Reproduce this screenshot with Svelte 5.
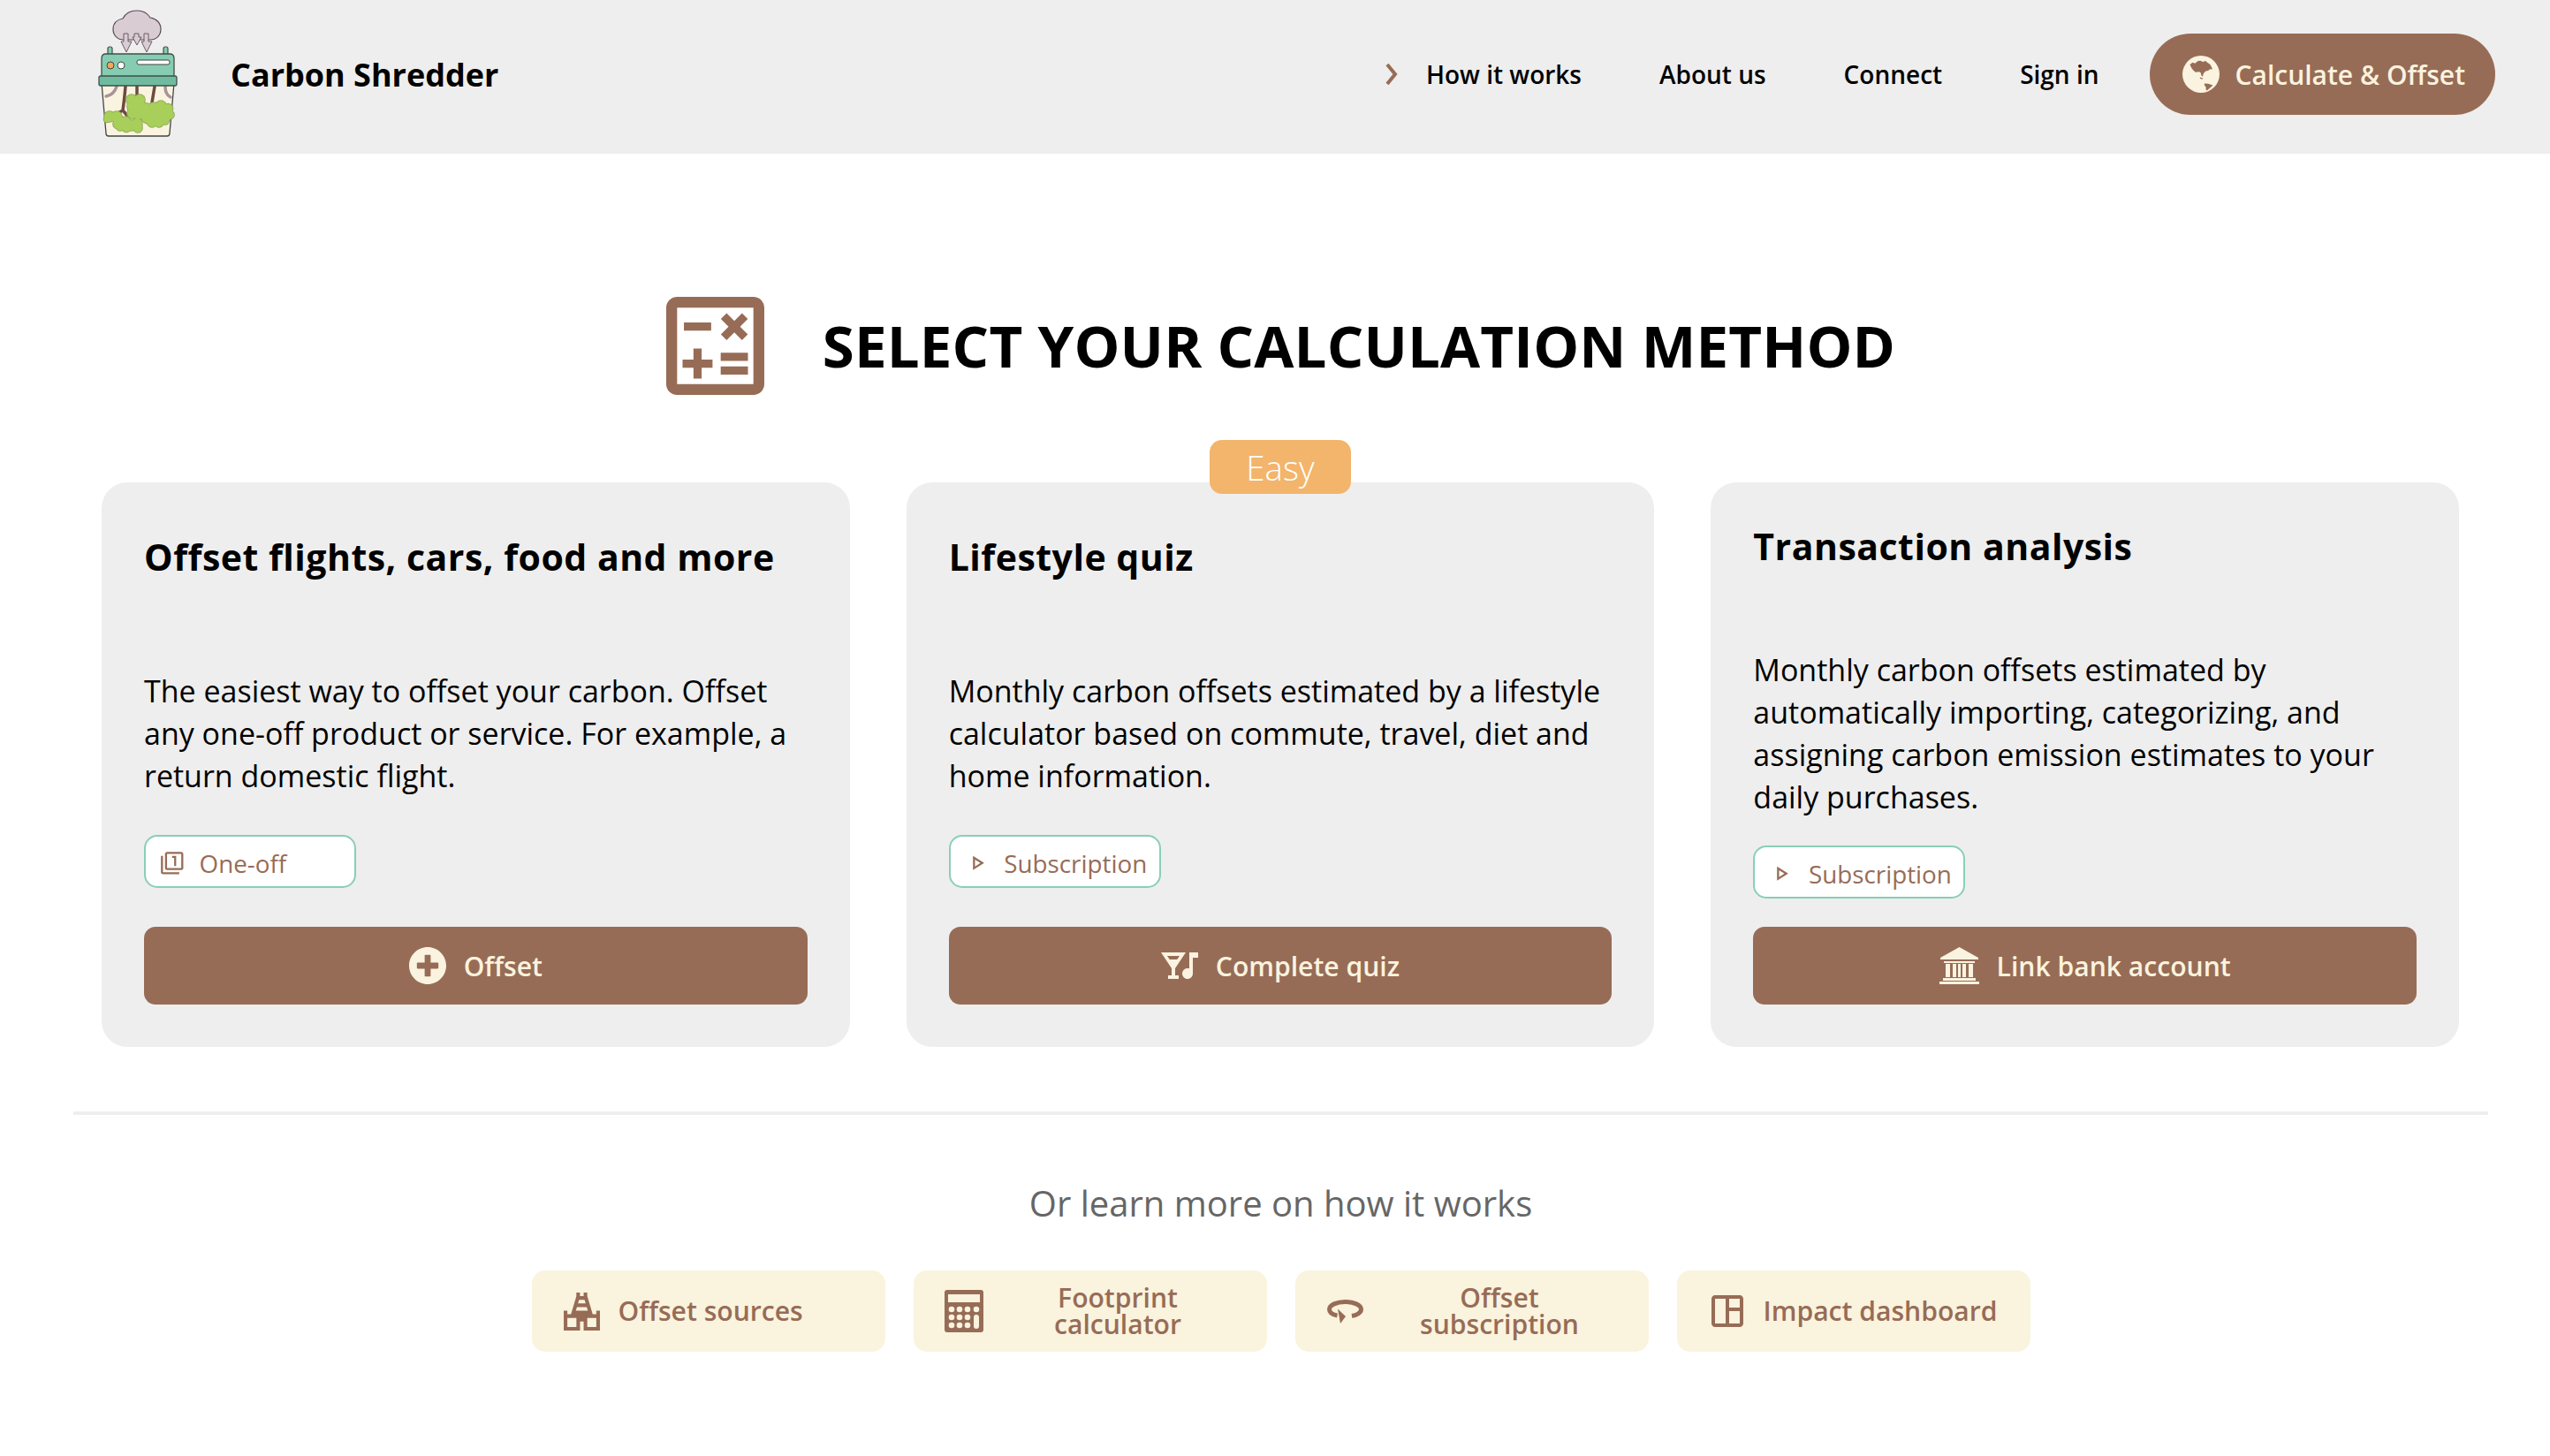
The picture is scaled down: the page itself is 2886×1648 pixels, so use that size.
<script>
  const nav = ['About us', 'Connect', 'Sign in'];

  const filterOne = 'M3 5H1v16c0 1.1.9 2 2 2h16v-2H3V5zm11 10h2V5h-4v2h2v8zm7-14H7c-1.1 0-2 .9-2 2v14c0 1.1.9 2 2 2h14c1.1 0 2-.9 2-2V3c0-1.1-.9-2-2-2zm0 16H7V3h14v14z';
  const playOutline = 'M10 8.64L15.27 12 10 15.36V8.64M8 5v14l11-7L8 5z';

  const methods = [
    {
      title: 'Offset flights, cars, food and more',
      text: 'The easiest way to offset your carbon. Offset any one-off product or service. For example, a return domestic flight.',
      tag: 'One-off',
      tagIcon: filterOne,
      action: 'Offset',
      icon: 'plus'
    },
    {
      title: 'Lifestyle quiz',
      text: 'Monthly carbon offsets estimated by a lifestyle calculator based on commute, travel, diet and home information.',
      tag: 'Subscription',
      tagIcon: playOutline,
      action: 'Complete quiz',
      icon: 'quiz',
      badge: 'Easy'
    },
    {
      title: 'Transaction analysis',
      text: 'Monthly carbon offsets estimated by automatically importing, categorizing, and assigning carbon emission estimates to your daily purchases.',
      tag: 'Subscription',
      tagIcon: playOutline,
      action: 'Link bank account',
      icon: 'bank'
    }
  ];

  const links = [
    { label: 'Offset sources', icon: 'temple' },
    { label: 'Footprint calculator', icon: 'calc' },
    { label: 'Offset subscription', icon: 'rotate' },
    { label: 'Impact dashboard', icon: 'dash' }
  ];

  const calcDots = [
    [8, 22], [17, 22], [26, 22], [36, 22],
    [8, 31], [17, 31], [26, 31],
    [8, 40], [17, 40], [26, 40]
  ];

  // leaf clumps of the logo, drawn twice so that only the outer edge keeps a stroke
  const leaves = [
    [34, 132, 6], [42, 132, 6], [31, 135, 3.500], [46, 136, 4],
    [44, 140, 6], [52, 138, 6], [58, 142, 6], [46, 144, 4], [53, 145, 4.500],
    [59, 113, 6], [68, 113, 6], [63, 120, 9], [72, 121, 5], [60, 128, 6], [67, 128, 7],
    [65, 140, 6], [66, 145, 5],
    [76, 124, 7], [84, 122, 6], [92, 120, 6], [100, 123, 5.500], [102, 130, 5],
    [78, 132, 8], [88, 131, 9], [96, 132, 7], [82, 139, 5], [90, 139, 5], [97, 137, 4]
  ];
</script>

<header class="topbar">
  <svg class="logo" viewBox="0 0 130 170" aria-hidden="true">
    <path d="M38 33c0-7 5-11 11-12 3-6 9-9 16-9 7 0 12 3 15 8 7 1 12 6 12 13 0 7-5 12-12 12H50c-7 0-12-5-12-12z" fill="#d9ccd3" stroke="#5a4d55" stroke-width="1.2" />
    <g fill="#d9ccd3" stroke="#6a5d65" stroke-width="1">
      <path d="M50 38h5v9h4l-6 12-6-12h3z" />
      <path d="M62 38h5v4h3l-5 9-5-9h2z" />
      <path d="M73 38h5v9h4l-6 12-6-12h3z" />
    </g>
    <rect x="32" y="53" width="5" height="10" rx="2" fill="#86ccb2" stroke="#3f4f49" stroke-width="1.2" />
    <rect x="95" y="53" width="5" height="10" rx="2" fill="#86ccb2" stroke="#3f4f49" stroke-width="1.2" />
    <path d="M25 94l5 57c0 2 1 3 3 3h66c2 0 3-1 3-3l5-57z" fill="#faf3df" stroke="#3f4642" stroke-width="1.3" />
    <g fill="none" stroke="#6e4a40" stroke-width="3.500" stroke-linecap="round">
      <path d="M52 98c-1 12-2 20-3 27l-11 6M49 125l7 8" />
      <path d="M65 98v10" />
      <path d="M85 98l-3 18" />
    </g>
    <path d="M42 98c-2 6-6 10-12 11M97 98c0 5 2 10 6 12" fill="none" stroke="#a7939c" stroke-width="3.500" stroke-linecap="round" />
    <g fill="#8aa353">
      {#each leaves as [cx, cy, r]}
        <circle {cx} {cy} r={r + 0.8} />
      {/each}
    </g>
    <g fill="#a7cf5a">
      {#each leaves as [cx, cy, r]}
        <circle {cx} {cy} {r} />
      {/each}
    </g>
    <path d="M25 87V66c0-3 2-5 5-5h72c3 0 5 2 5 5v21z" fill="#86ccb2" stroke="#3f4f49" stroke-width="1.3" />
    <circle cx="35" cy="74" r="4" fill="#f0a95c" stroke="#3f4642" stroke-width="1" />
    <circle cx="47" cy="74" r="4" fill="#fff" stroke="#3f4642" stroke-width="1" />
    <rect x="65" y="68" width="37" height="5" rx="2" fill="#fff" stroke="#3f4642" stroke-width="1" />
    <rect x="22" y="86" width="88" height="11" rx="2" fill="#6fbb9f" stroke="#3f4f49" stroke-width="1.3" />
  </svg>
  <span class="brand">Carbon Shredder</span>

  <nav class="menu">
    <span class="menu-first">
      <svg class="chevron" viewBox="0 0 14 24" aria-hidden="true">
        <path d="M2 1l9 11-9 11" fill="none" stroke="#976c56" stroke-width="4" />
      </svg>
      How it works
    </span>
    {#each nav as item}
      <span>{item}</span>
    {/each}
    <button class="cta">
      <svg class="globe" viewBox="0 0 124 124" aria-hidden="true">
        <circle cx="62" cy="62" r="62" fill="#faf3df" />
        <path d="M24 30l10-7 8 3 10-8 8-1 8 4 10-3 5 5 9 6 6 10 2 7-8-1-6 5-8 2-8 8-2 10-5-4-2-9-5-3-12 1-8-6-7-10-3-8z" fill="#976c56" />
        <path d="M58 72l10 3-1 4-7-2z" fill="#976c56" />
        <path d="M74 93l12 1 16 5-10 9-9 8-4-1-1-11-5-6z" fill="#976c56" />
      </svg>
      Calculate &amp; Offset
    </button>
  </nav>
</header>

<main class="page">
  <div class="heading">
    <svg class="heading-icon" viewBox="3 3 18 18" aria-hidden="true">
      <path fill="#976c56" d="M19 3H5c-1.1 0-2 .9-2 2v14c0 1.1.9 2 2 2h14c1.1 0 2-.9 2-2V5c0-1.1-.9-2-2-2zm0 16H5V5h14v14zM6.25 7.72h5v1.5h-5zM13 15.75h5v1.5h-5zM13 13.25h5v1.5h-5zM8 18h1.5v-2h2v-1.5h-2v-2H8v2H6V16h2zM14.09 10.95l1.41-1.41 1.41 1.41 1.06-1.06-1.41-1.42 1.41-1.41L16.91 6 15.5 7.41 14.09 6l-1.06 1.06 1.41 1.41-1.41 1.42z" />
    </svg>
    <h1>SELECT YOUR CALCULATION METHOD</h1>
  </div>

  <section class="methods">
    {#each methods as m}
      <article class="card">
        {#if m.badge}
          <span class="badge">{m.badge}</span>
        {/if}
        <div class="card-body">
          <h2>{m.title}</h2>
          <p>{m.text}</p>
          <span class="tag">
            <svg class="tag-icon" viewBox="0 0 24 24" aria-hidden="true"><path d={m.tagIcon} /></svg>
            {m.tag}
          </span>
        </div>
        <button class="action">
          {#if m.icon === 'plus'}
            <svg class="action-icon" width="42" height="42" viewBox="8 8 496 496" aria-hidden="true">
              <path d="M256 8C119 8 8 119 8 256s111 248 248 248 248-111 248-248S393 8 256 8zm144 276c0 6.600-5.400 12-12 12h-92v92c0 6.600-5.400 12-12 12h-56c-6.600 0-12-5.400-12-12v-92h-92c-6.600 0-12-5.400-12-12v-56c0-6.600 5.400-12 12-12h92v-92c0-6.600 5.400-12 12-12h56c6.600 0 12 5.400 12 12v92h92c6.600 0 12 5.400 12 12v56z" />
            </svg>
          {:else if m.icon === 'quiz'}
            <svg class="action-icon" width="42" height="30" viewBox="1 5 21 15" aria-hidden="true">
              <path d="M1 5h14l-6 9v4h2v2H5v-2h2v-4L1 5zm9.100 4 1.400-2H4.490l1.400 2h4.210zM17 5h5v3h-3v9c0 1.660-1.340 3-3 3s-3-1.340-3-3 1.340-3 3-3c.35 0 .69.06 1 .17V5z" />
            </svg>
          {:else}
            <svg class="action-icon" width="45" height="42" viewBox="0 0 45 42" aria-hidden="true">
              <path d="M22.500 0L44 12v2H1v-2z" />
              <path d="M5 16h35v2H5zM4 35h37v3H4zM0 39h45v3H0z" />
              <path d="M7 19h5v15H7zM15 19h4v15h-4zM21 19h3v15h-3zM26 19h4v15h-4zM33 19h5v15h-5z" />
            </svg>
          {/if}
          {m.action}
        </button>
      </article>
    {/each}
  </section>

  <hr class="rule" />

  <p class="more">Or learn more on how it works</p>

  <section class="links">
    {#each links as link}
      <button class="link">
        <span class="link-icon">
          {#if link.icon === 'temple'}
            <svg width="41" height="43" viewBox="2 1 20 21" aria-hidden="true">
              <path fill-rule="evenodd" d="M20 11v2h-2L15 3V1h-2v2h-2.030V1h-2v2.120L6 13H4v-2H2v11h9v-5h2v5h9V11h-2zm-4.690 0H8.690l.6-2h5.420l.6 2zm-1.200-4H9.890l.6-2h3.020l.6 2zM20 20h-5v-5H9v5H4v-5h16v5z" />
            </svg>
          {:else if link.icon === 'calc'}
            <svg width="44" height="48" viewBox="0 0 44 48" aria-hidden="true">
              <rect width="44" height="48" rx="3" />
              <rect x="4" y="5" width="36" height="9" fill="#faf3de" />
              {#each calcDots as [cx, cy]}
                <circle {cx} {cy} r="3.300" fill="#faf3de" />
              {/each}
              <rect x="33" y="28" width="6" height="16" rx="3" fill="#faf3de" />
            </svg>
          {:else if link.icon === 'rotate'}
            <svg width="41" height="27" viewBox="0 0 41 27" aria-hidden="true">
              <path d="M28 18.500C34 17.500 38.500 14.500 38.500 11 38.500 6 30 2.500 20.500 2.500 11 2.500 2.500 6 2.500 11c0 3.500 3.500 6 9 7" fill="none" stroke="#976c56" stroke-width="5" />
              <path d="M12 10.500l9 8.500-6 8z" />
            </svg>
          {:else}
            <svg width="36" height="36" viewBox="3 3 18 18" aria-hidden="true">
              <path d="M19 3H5c-1.100 0-2 .9-2 2v14c0 1.100.9 2 2 2h14c1.100 0 2-.9 2-2V5c0-1.100-.9-2-2-2zM5 19V5h6v14H5zm14 0h-6v-7h6v7zm0-9h-6V5h6v5z" />
            </svg>
          {/if}
        </span>
        <span class="link-label">{link.label}</span>
      </button>
    {/each}
  </section>
</main>

<style>
  :global(body) {
    background: #fff;
    font-family: 'Open Sans', 'Liberation Sans', sans-serif;
    color: #000;
  }

  button {
    font: inherit;
    border: 0;
    cursor: pointer;
  }

  .topbar {
    display: flex;
    align-items: center;
    box-sizing: border-box;
    height: 174px;
    background: #eee;
    padding: 0 62px 6px 90px;
  }

  .logo {
    align-self: flex-start;
    width: 130px;
    height: 170px;
    flex: none;
    margin-right: 41px;
  }

  .brand {
    font-size: 36px;
    font-weight: 700;
  }

  .menu {
    margin-left: auto;
    display: flex;
    align-items: center;
    gap: 88px;
    font-size: 28px;
    font-weight: 600;
  }

  .menu-first {
    display: flex;
    align-items: center;
    gap: 32px;
  }

  .chevron {
    width: 14px;
    height: 24px;
  }

  .cta {
    display: flex;
    align-items: center;
    gap: 18px;
    height: 92px;
    margin-left: -31px;
    padding: 0 34px 0 37px;
    border-radius: 46px;
    background: #976c56;
    color: #faf3df;
    font-size: 30px;
    font-weight: 600;
  }

  .globe {
    width: 42px;
    height: 42px;
  }

  .page {
    padding: 162px 70px 0 83px;
  }

  .heading {
    display: flex;
    align-items: center;
    justify-content: center;
    gap: 66px;
  }

  .heading-icon {
    width: 111px;
    height: 111px;
  }

  h1 {
    margin: 0;
    font-size: 65.400px;
    font-weight: 700;
    letter-spacing: 0.13px;
    line-height: 1.2;
  }

  .methods {
    display: grid;
    grid-template-columns: repeat(3, 1fr);
    gap: 64px;
    margin: 99px 33px 0 32px;
  }

  .card {
    position: relative;
    display: flex;
    flex-direction: column;
    height: 639px;
    box-sizing: border-box;
    padding: 18px 48px 48px;
    border-radius: 29px;
    background: #eee;
  }

  .badge {
    position: absolute;
    top: -48px;
    left: 50%;
    transform: translateX(-50%);
    width: 160px;
    height: 61px;
    display: flex;
    align-items: center;
    justify-content: center;
    border-radius: 14px;
    background: #f2b56b;
    color: #fff;
    font-size: 38.500px;
    font-weight: 350;
  }

  .card-body {
    flex: 1;
    display: flex;
    flex-direction: column;
    justify-content: space-evenly;
    align-items: flex-start;
  }

  h2 {
    margin: 0;
    height: 106px;
    font-size: 41px;
    line-height: 44px;
    font-weight: 700;
    letter-spacing: 0.5px;
  }

  .card p {
    margin: 0;
    font-size: 34px;
    line-height: 48px;
  }

  .tag {
    display: flex;
    align-items: center;
    box-sizing: border-box;
    width: 240px;
    height: 60px;
    padding: 3px 0 0 16px;
    border: 2px solid #88cfb5;
    border-radius: 15px;
    background: #fff;
    color: #976c56;
    font-size: 27.800px;
  }

  .tag-icon {
    width: 27.600px;
    height: 27.600px;
    margin-right: 17px;
    fill: #976c56;
  }

  .action {
    display: flex;
    align-items: center;
    justify-content: center;
    gap: 20px;
    height: 88px;
    border-radius: 13px;
    background: #976c56;
    color: #faf3df;
    font-size: 30.100px;
    font-weight: 600;
  }

  .action-icon {
    fill: #faf3df;
  }

  .rule {
    margin: 73px 0 0;
    border: 0;
    height: 4px;
    background: #eee;
  }

  .more {
    margin: 75px 0 0;
    text-align: center;
    color: #666;
    font-size: 40px;
    line-height: 50px;
  }

  .links {
    display: flex;
    justify-content: center;
    gap: 32px;
    margin-top: 51px;
  }

  .link {
    display: flex;
    align-items: center;
    width: 400px;
    height: 92px;
    padding: 0 35px 0 33px;
    border-radius: 15px;
    background: #faf3de;
    color: #976c56;
    font-size: 30.100px;
    font-weight: 600;
    line-height: 30px;
  }

  .link-icon {
    flex: none;
    display: flex;
    align-items: center;
    justify-content: center;
    width: 48px;
    margin-right: 17px;
    fill: #976c56;
  }

  .link-label {
    flex: 0 1 auto;
    text-align: center;
  }
</style>
